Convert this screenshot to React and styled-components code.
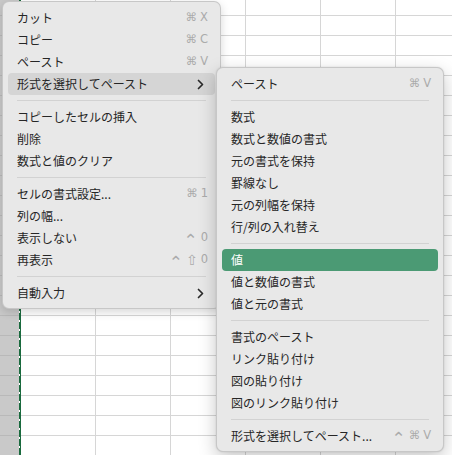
import React from "react";
import styled, { createGlobalStyle } from "styled-components";

const GlobalStyle = createGlobalStyle`
  html, body { margin: 0; padding: 0; background: #ffffff; }
  body { overflow: hidden; }
  * { box-sizing: border-box; }
`;

const Page = styled.div`
  position: relative;
  width: 452px;
  height: 455px;
  overflow: hidden;
  background: #ffffff;
  font-family: "Noto Sans CJK JP", "Noto Sans", sans-serif;
`;

const Sheet = styled.div`
  display: flex;
  margin-top: -4px;
`;

const RowHeader = styled.div`
  width: 19px;
  flex: none;
  background: #c9c9c9;
`;

const HeaderCell = styled.div`
  height: 20px;
  border-bottom: 1px solid #b9b9b9;
`;

const CopyBorder = styled.div`
  width: 2px;
  flex: none;
  background:
    repeating-linear-gradient(
      to bottom,
      #ffffff 0px,
      #ffffff 2px,
      transparent 2px,
      transparent 9px
    ) left top / 1px 100% no-repeat,
    #1a6a3e;
`;

const CellGrid = styled.div`
  display: grid;
  grid-template-columns: repeat(6, 75px);
  grid-auto-rows: 20px;
`;

const Cell = styled.div`
  border-right: 1px solid #d6d6d6;
  border-bottom: 1px solid #d6d6d6;
`;

const Menu = styled.div`
  position: absolute;
  left: ${(p) => p.$left}px;
  top: ${(p) => p.$top}px;
  width: ${(p) => p.$width}px;
  padding: 5px 5px 4px;
  background: #e8e8e8;
  border-radius: 7px;
  border: 0.5px solid rgba(0, 0, 0, 0.14);
  box-shadow: ${(p) =>
    p.$sub
      ? "0 6px 18px rgba(0,0,0,0.22), 0 0 2px rgba(0,0,0,0.12)"
      : "0 3px 10px rgba(0,0,0,0.16)"};
  display: flex;
  flex-direction: column;
`;

const Item = styled.div`
  height: 22px;
  display: flex;
  align-items: center;
  justify-content: space-between;
  padding: 0 ${(p) => (p.$arrow ? 11 : 7)}px 0 9px;
  border-radius: 4px;
  font-size: 12px;
  line-height: 22px;
  color: ${(p) => (p.$active === "green" ? "#ffffff" : "#262626")};
  background: ${(p) =>
    p.$active === "green"
      ? "#4b9a74"
      : p.$active === "gray"
      ? "#d5d5d5"
      : "transparent"};
`;

const Label = styled.span`
  white-space: nowrap;
`;

const Shortcut = styled.span`
  display: flex;
  align-items: center;
  gap: 3px;
  font-family: "DejaVu Sans", "Liberation Sans", sans-serif;
  font-size: 11.5px;
  color: #ababab;
  white-space: nowrap;
`;

const sizes = { "⌃": 17, "⇧": 14 };
const offsets = { "⌃": 2, "⇧": 0 };

const Key = styled.span`
  font-size: ${(p) => sizes[p.$k] || 11.5}px;
  line-height: 1;
  position: relative;
  top: ${(p) => offsets[p.$k] || 0}px;
`;

const Separator = styled.div`
  height: 11px;
  display: flex;
  align-items: center;
  padding: 0 9px;
  &::after {
    content: "";
    flex: 1;
    height: 1px;
    background: #d2d2d2;
  }
`;

const Chevron = () => (
  <svg width="7" height="11" viewBox="0 0 7 11" fill="none">
    <path
      d="M1.5 1.5 L5.5 5.5 L1.5 9.5"
      stroke="#2a2a2a"
      strokeWidth="1.7"
      strokeLinecap="round"
      strokeLinejoin="round"
    />
  </svg>
);

const mainItems = [
  { label: "カット", sc: ["⌘", "X"] },
  { label: "コピー", sc: ["⌘", "C"] },
  { label: "ペースト", sc: ["⌘", "V"] },
  { label: "形式を選択してペースト", arrow: true, active: "gray" },
  { sep: true },
  { label: "コピーしたセルの挿入" },
  { label: "削除" },
  { label: "数式と値のクリア" },
  { sep: true },
  { label: "セルの書式設定...", sc: ["⌘", "1"] },
  { label: "列の幅..." },
  { label: "表示しない", sc: ["⌃", "0"] },
  { label: "再表示", sc: ["⌃", "⇧", "0"] },
  { sep: true },
  { label: "自動入力", arrow: true },
];

const subItems = [
  { label: "ペースト", sc: ["⌘", "V"] },
  { sep: true },
  { label: "数式" },
  { label: "数式と数値の書式" },
  { label: "元の書式を保持" },
  { label: "罫線なし" },
  { label: "元の列幅を保持" },
  { label: "行/列の入れ替え" },
  { sep: true },
  { label: "値", active: "green" },
  { label: "値と数値の書式" },
  { label: "値と元の書式" },
  { sep: true },
  { label: "書式のペースト" },
  { label: "リンク貼り付け" },
  { label: "図の貼り付け" },
  { label: "図のリンク貼り付け" },
  { sep: true },
  { label: "形式を選択してペースト...", sc: ["⌃", "⌘", "V"] },
];

const renderItems = (items) =>
  items.map((it, i) =>
    it.sep ? (
      <Separator key={i} />
    ) : (
      <Item key={i} $active={it.active} $arrow={it.arrow}>
        <Label>{it.label}</Label>
        {it.sc && (
          <Shortcut>
            {it.sc.map((k, j) => (
              <Key key={j} $k={k}>
                {k}
              </Key>
            ))}
          </Shortcut>
        )}
        {it.arrow && <Chevron />}
      </Item>
    )
  );

const ROWS = 24;

export default function App() {
  return (
    <>
      <GlobalStyle />
      <Page>
        <Sheet>
          <RowHeader>
            {Array.from({ length: ROWS }).map((_, i) => (
              <HeaderCell key={i} />
            ))}
          </RowHeader>
          <CopyBorder />
          <CellGrid>
            {Array.from({ length: ROWS * 6 }).map((_, i) => (
              <Cell key={i} />
            ))}
          </CellGrid>
        </Sheet>
        <Menu $left={2} $top={1} $width={219}>
          {renderItems(mainItems)}
        </Menu>
        <Menu $left={216} $top={67} $width={228} $sub>
          {renderItems(subItems)}
        </Menu>
      </Page>
    </>
  );
}
